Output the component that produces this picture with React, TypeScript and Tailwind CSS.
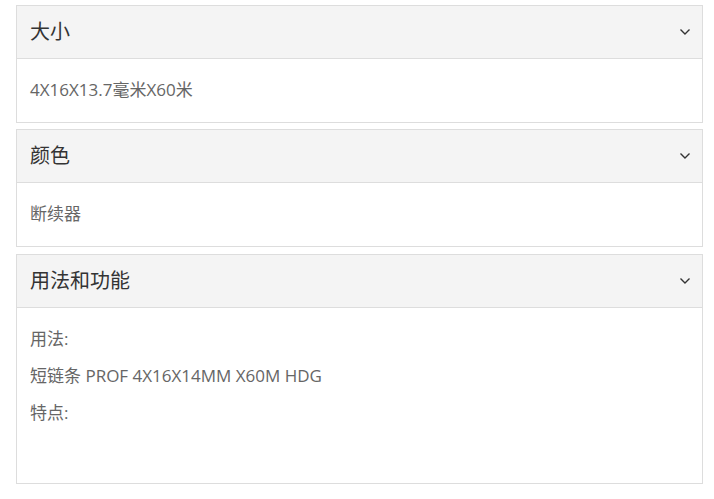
import React from 'react';

type Section = {
  title: string;
  lines: string[];
  cardClass: string;
  bodyClass: string;
};

const SECTIONS: Section[] = [
  { title: '大小', lines: ['4X16X13.7毫米X60米'], cardClass: 'mb-[6px]', bodyClass: 'h-[63px] pt-[19px]' },
  { title: '颜色', lines: ['断续器'], cardClass: 'mb-[7px]', bodyClass: 'h-[63px] pt-[19px]' },
  {
    title: '用法和功能',
    lines: ['用法:', '短链条 PROF 4X16X14MM X60M HDG', '特点:'],
    cardClass: '',
    bodyClass: 'h-[175px] pt-[19px]',
  },
];

const Chevron: React.FC = () => (
  <svg width="12" height="8" viewBox="0 0 12 8" fill="none" className="text-[#333]">
    <path d="M1.5 1.5 L6 6 L10.5 1.5" stroke="currentColor" strokeWidth="1.4" />
  </svg>
);

const App: React.FC = () => {
  return (
    <div
      className="min-h-screen bg-white pt-[5px] pl-4 pr-[11px]"
      style={{ fontFamily: '"Open Sans", "Noto Sans CJK SC", sans-serif' }}
    >
      {SECTIONS.map((s) => (
        <div key={s.title} className={`${s.cardClass} border border-[#dddddd] bg-white`}>
          {/* header */}
          <div className="flex h-[53px] items-center justify-between border-b border-[#dddddd] bg-[#f4f4f4] pl-[13px] pr-[11px]">
            <span className="text-[20px] text-[#333]">{s.title}</span>
            <Chevron />
          </div>
          {/* body */}
          <div className={`${s.bodyClass} px-[13px]`}>
            {s.lines.map((l, i) => (
              <p key={i} className="mb-[13px] text-[17px] leading-6 text-[#666]">
                {l}
              </p>
            ))}
          </div>
        </div>
      ))}
    </div>
  );
};

export default App;
